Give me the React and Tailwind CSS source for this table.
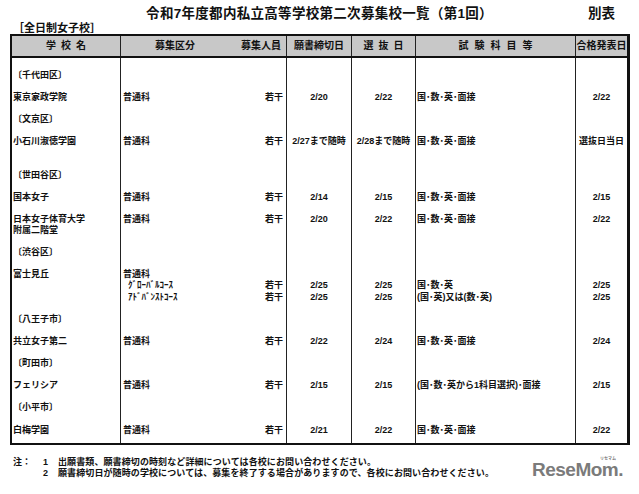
import React from 'react';

const lines = [
  { name: '〔千代田区〕' },
  null,
  { name: '東京家政学院', kubun: '普通科', ninzu: '若干', shime: '2/20', senbatsu: '2/22', kamoku: '国･数･英･面接', happyo: '2/22' },
  null,
  { name: '〔文京区〕' },
  null,
  { name: '小石川淑徳学園', kubun: '普通科', ninzu: '若干', shime: '2/27まで随時', senbatsu: '2/28まで随時', kamoku: '国･数･英･面接', happyo: '選抜日当日' },
  null,
  null,
  { name: '〔世田谷区〕' },
  null,
  { name: '国本女子', kubun: '普通科', ninzu: '若干', shime: '2/14', senbatsu: '2/15', kamoku: '国･数･英･面接', happyo: '2/15' },
  null,
  { name: '日本女子体育大学', kubun: '普通科', ninzu: '若干', shime: '2/20', senbatsu: '2/22', kamoku: '国･数･英･面接', happyo: '2/22' },
  { name: '附属二階堂' },
  null,
  { name: '〔渋谷区〕' },
  null,
  { name: '富士見丘', kubun: '普通科' },
  { kubun: 'ｸﾞﾛｰﾊﾞﾙｺｰｽ', sub: true, ninzu: '若干', shime: '2/25', senbatsu: '2/25', kamoku: '国･数･英', happyo: '2/25' },
  { kubun: 'ｱﾄﾞﾊﾞﾝｽﾄｺｰｽ', sub: true, ninzu: '若干', shime: '2/25', senbatsu: '2/25', kamoku: '(国･英)又は(数･英)', happyo: '2/25' },
  null,
  { name: '〔八王子市〕' },
  null,
  { name: '共立女子第二', kubun: '普通科', ninzu: '若干', shime: '2/22', senbatsu: '2/24', kamoku: '国･数･英･面接', happyo: '2/24' },
  null,
  { name: '〔町田市〕' },
  null,
  { name: 'フェリシア', kubun: '普通科', ninzu: '若干', shime: '2/15', senbatsu: '2/15', kamoku: '(国･数･英から1科目選択)･面接', happyo: '2/15' },
  null,
  { name: '〔小平市〕' },
  null,
  { name: '白梅学園', kubun: '普通科', ninzu: '若干', shime: '2/21', senbatsu: '2/22', kamoku: '国･数･英･面接', happyo: '2/22' },
];

const cols = 'grid grid-cols-[109px_166px_65px_64px_160px_51px]';
const lineCls = 'h-[11.08px] leading-[11px] whitespace-nowrap';

function Spaced({ chars, gap }) {
  return (
    <div className={`flex justify-center ${gap}`}>
      {chars.map((c, i) => (
        <span key={i}>{c}</span>
      ))}
    </div>
  );
}

function Column({ className, render }) {
  return (
    <div className={`pt-[12px] ${className}`}>
      {lines.map((l, i) => (
        <div key={i} className={lineCls}>
          {l ? render(l) : null}
        </div>
      ))}
    </div>
  );
}

export default function App() {
  return (
    <div className="w-[639px] h-[494px] bg-white text-[#111] font-bold font-['Liberation_Sans','Noto_Sans_CJK_JP',sans-serif] overflow-hidden">
      <div className="grid grid-cols-[1fr_auto_1fr] items-center h-[16px] mt-[6px]">
        <div />
        <div className="text-[13.5px] leading-[16px] tracking-[0.3px]">令和7年度都内私立高等学校第二次募集校一覧（第1回）</div>
        <div className="justify-self-end pr-[24px] text-[13.5px] leading-[16px]">別表</div>
      </div>

      <div className="h-[12px] pl-[13px] text-[11px] leading-[12px]">［全日制女子校］</div>

      <div className="ml-[10px] w-[620px] border-2 border-r-[3px] border-[#111]">
        <div className={`${cols} h-[22px] bg-[#c8c8c8] border-b-2 border-[#111] text-[10px] leading-[20px]`}>
          <div className="border-r border-[#222]">
            <Spaced chars={['学', '校', '名']} gap="gap-[5px]" />
          </div>
          <div className="border-r border-[#222] flex justify-between pl-[34px] pr-[5px]">
            <span>募集区分</span>
            <span>募集人員</span>
          </div>
          <div className="border-r border-[#222] text-center">願書締切日</div>
          <div className="border-r border-[#222]">
            <Spaced chars={['選', '抜', '日']} gap="gap-[5px]" />
          </div>
          <div className="border-r border-[#222]">
            <Spaced chars={['試', '験', '科', '目', '等']} gap="gap-[6px]" />
          </div>
          <div className="text-center">合格発表日</div>
        </div>

        <div className={`${cols} h-[385px] text-[9px]`}>
          <Column className="border-r border-[#222] pl-[1px]" render={(l) => l.name} />
          <Column
            className="border-r border-[#222] pl-[2px] pr-[3px]"
            render={(l) => (
              <div className="flex justify-between">
                <span className={l.sub ? 'pl-[5px]' : ''}>{l.kubun}</span>
                <span>{l.ninzu}</span>
              </div>
            )}
          />
          <Column className="border-r border-[#222] text-center" render={(l) => l.shime} />
          <Column className="border-r border-[#222] text-center" render={(l) => l.senbatsu} />
          <Column className="border-r border-[#222] pl-[1px]" render={(l) => l.kamoku} />
          <Column className="text-center" render={(l) => l.happyo} />
        </div>
      </div>

      <div className="flex justify-between items-center mt-[12px] pl-[13px] pr-[16px]">
        <div className="text-[9px] leading-[11px] tracking-[0.1px]">
          <div className="flex">
            <span className="w-[30px]">注：</span>
            <span className="w-[15px]">1</span>
            <span>出願書類、願書締切の時刻など詳細については各校にお問い合わせください。</span>
          </div>
          <div className="flex">
            <span className="w-[30px]" />
            <span className="w-[15px]">2</span>
            <span>願書締切日が随時の学校については、募集を終了する場合がありますので、各校にお問い合わせください。</span>
          </div>
        </div>
        <div className="relative mt-[3px] text-[#7b7b7b] text-[19px] leading-[16px] font-bold tracking-[-0.5px] font-['Liberation_Sans',sans-serif]">
          ReseMom.
          <span className="absolute right-[7px] top-[-6px] text-[4px] leading-[4px] tracking-normal font-['Noto_Sans_CJK_JP',sans-serif]">リセマム</span>
        </div>
      </div>
    </div>
  );
}
